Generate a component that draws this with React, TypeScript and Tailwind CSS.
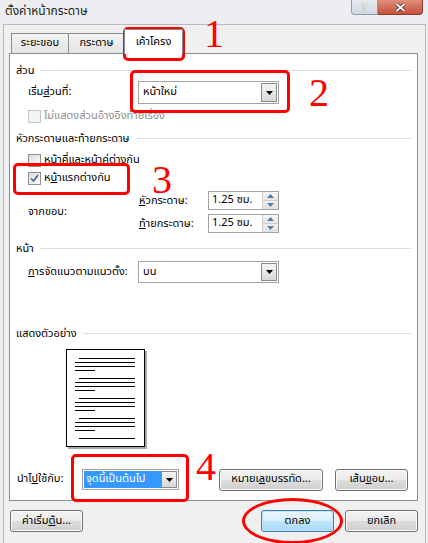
import React from "react";

const btn =
  "flex h-[22px] items-center justify-center rounded-[3px] border border-[#707070] bg-[linear-gradient(to_bottom,#f2f2f2_0%,#ebebeb_49%,#dddddd_50%,#cfcfcf_100%)] shadow-[inset_0_0_0_1px_#fbfbfb] text-[11px] text-black";

function DropBtn() {
  return (
    <div className="flex w-[16px] items-center justify-center border border-[#8a8a8a] bg-[linear-gradient(to_bottom,#f4f4f4,#d8d8d8)]">
      <svg width="7" height="4" viewBox="0 0 7 4">
        <path d="M0 0H7L3.5 4Z" fill="#000" />
      </svg>
    </div>
  );
}

function Select({ className, text }: { className: string; text: string }) {
  return (
    <div className={"flex items-stretch border border-[#a2a2a2] bg-white p-px " + className}>
      <div className="flex flex-1 items-center pl-[3px] text-[11px]">{text}</div>
      <DropBtn />
    </div>
  );
}

function Header({ text }: { text: string }) {
  return (
    <div className="flex h-[14px] items-center">
      <span className="pr-[6px] text-[11px] leading-none">{text}</span>
      <div className="h-px flex-1 bg-[#d5dfe5]" />
    </div>
  );
}

function Checkbox({ checked, disabled }: { checked?: boolean; disabled?: boolean }) {
  return (
    <div
      className={
        "flex h-[13px] w-[13px] items-center justify-center border " +
        (disabled
          ? "border-[#c6c6c6] bg-[#f4f4f4]"
          : "border-[#8e8f8f] bg-[linear-gradient(135deg,#dcdcdc,#ffffff)]")
      }
    >
      {checked && (
        <svg width="9" height="9" viewBox="0 0 9 9">
          <path d="M1 4.5L3.5 7L8 1" stroke="#4a5f97" strokeWidth="1.6" fill="none" />
        </svg>
      )}
    </div>
  );
}

function Spin({ value }: { value: string }) {
  return (
    <div className="flex h-[19px] w-[71px] items-stretch border border-[#a2a2a2] bg-white">
      <div className="flex flex-1 items-center pl-[3px] text-[11px]">{value}</div>
      <div className="flex w-[16px] flex-col border-l border-[#d0d0d0]">
        <div className="flex flex-1 items-center justify-center border-b border-[#d0d0d0] bg-[linear-gradient(to_bottom,#f7f7f7,#e6e6e6)]">
          <svg width="7" height="4" viewBox="0 0 7 4">
            <path d="M0 4H7L3.5 0Z" fill="#4d7fb3" />
          </svg>
        </div>
        <div className="flex flex-1 items-center justify-center bg-[linear-gradient(to_bottom,#f0f0f0,#e0e0e0)]">
          <svg width="7" height="4" viewBox="0 0 7 4">
            <path d="M0 0H7L3.5 4Z" fill="#4d7fb3" />
          </svg>
        </div>
      </div>
    </div>
  );
}

function Preview() {
  const lines: React.ReactNode[] = [];
  for (let k = 0; k < 5; k++) {
    const y = 8.5 + 20 * k;
    lines.push(<line key={"a" + k} x1={12} x2={68} y1={y} y2={y} stroke="#000" />);
    if (k < 4) {
      lines.push(<line key={"b" + k} x1={8} x2={68} y1={y + 4} y2={y + 4} stroke="#000" />);
      lines.push(<line key={"c" + k} x1={8} x2={68} y1={y + 8} y2={y + 8} stroke="#000" />);
      lines.push(<line key={"d" + k} x1={8} x2={28} y1={y + 12} y2={y + 12} stroke="#000" />);
    }
  }
  return (
    <div className="ml-[50px] mt-[9px] h-[98px] w-[79px] border border-black bg-white shadow-[2px_2px_0_#a8a8a8]">
      <svg width="77" height="96" viewBox="0 0 77 96">
        {lines}
      </svg>
    </div>
  );
}

const num =
  "pointer-events-none absolute text-[40px] text-[#ff0000] [font-family:'Liberation_Serif',serif]";
const box = "pointer-events-none absolute rounded-[5px] border-[3px] border-[#ff0000]";

export default function App() {
  return (
    <div className="relative flex h-[543px] w-[428px] flex-col overflow-hidden bg-[#eceef1] text-black [font-family:Tahoma,'Noto_Sans_Thai','Leelawadee_UI','DejaVu_Sans',sans-serif]">
      {/* title bar */}
      <div className="flex h-[24px] shrink-0 items-start justify-between">
        <div className="pl-[5px] pt-[3px] text-[12px] leading-[16px] text-[#1e1e1e]">ตั้งค่าหน้ากระดาษ</div>
        <div className="mr-[5px] flex">
          <div className="flex h-[15px] w-[27px] items-center justify-center rounded-bl-[4px] border border-t-0 border-[#8d99a8] bg-[linear-gradient(to_bottom,#e6ebf1,#cfd8e3)] text-[11px] font-bold leading-none text-white [text-shadow:0_0_1px_#333]">
            ?
          </div>
          <div className="flex h-[15px] w-[45px] items-center justify-center rounded-br-[4px] border border-l-0 border-t-0 border-[#8e3b2c] bg-[linear-gradient(to_bottom,#e08f7c,#c7503c)]">
            <svg width="11" height="9" viewBox="0 0 11 9">
              <path d="M1.5 1L9.5 8M9.5 1L1.5 8" stroke="#3a2a2a" strokeWidth="3.4" />
              <path d="M1.5 1L9.5 8M9.5 1L1.5 8" stroke="#fff" strokeWidth="1.8" />
            </svg>
          </div>
        </div>
      </div>

      {/* client area */}
      <div className="ml-[3px] mr-[2px] flex flex-1 flex-col border border-b-0 border-[#b3bac4] bg-[#f0f0f0] pl-[5px] pr-[7px]">
        {/* tabs */}
        <div className="flex h-[28px] items-end pl-[2px] text-[11px]">
          <div className="flex h-[20px] w-[58px] items-center justify-center border border-b-0 border-[#898c95] bg-[linear-gradient(to_bottom,#f3f3f3,#e3e3e3)]">
            ระยะขอบ
          </div>
          <div className="flex h-[20px] w-[56px] items-center justify-center border border-b-0 border-l-0 border-[#898c95] bg-[linear-gradient(to_bottom,#f3f3f3,#e3e3e3)]">
            กระดาษ
          </div>
          <div className="relative z-10 -mb-px -ml-[1px] flex h-[25px] w-[59px] items-center justify-center border border-b-0 border-[#898c95] bg-white">
            เค้าโครง
          </div>
        </div>

        {/* panel */}
        <div className="flex h-[448px] flex-col border border-[#898c95] bg-white pl-[6px] pr-[6px] text-[11px]">
          <div className="mt-[9px]">
            <Header text="ส่วน" />
          </div>
          <div className="mt-[4px] flex h-[23px] items-center pl-[12px]">
            <div className="w-[110px]">
              เริ่ม<u>ส</u>่วนที่:
            </div>
            <Select className="h-[23px] w-[141px]" text="หน้าใหม่" />
          </div>
          <div className="mt-[2px] flex h-[20px] items-center gap-[3px] pl-[12px] text-[#8d8d8d]">
            <Checkbox disabled />
            <span>ไม่แสดงส่วนอ้างอิงท้ายเรื่อง</span>
          </div>

          <div className="mt-[5px]">
            <Header text="หัวกระดาษและท้ายกระดาษ" />
          </div>
          <div className="mt-[6px] flex h-[18px] items-center gap-[3px] pl-[12px]">
            <Checkbox />
            <span>หน้าคี่และหน้าคู่ต่างกัน</span>
          </div>
          <div className="flex h-[18px] items-center gap-[3px] pl-[12px]">
            <Checkbox checked />
            <span>
              ห<u>น้</u>าแรกต่างกัน
            </span>
          </div>
          <div className="mt-[4px] flex h-[42px] items-center pl-[12px]">
            <div className="w-[111px]">จากขอบ:</div>
            <div className="flex flex-col gap-[4px]">
              <div className="flex items-center">
                <div className="w-[69px] leading-[14px]">
                  <u>หั</u>วกระดาษ:
                </div>
                <Spin value="1.25 ซม." />
              </div>
              <div className="flex items-center">
                <div className="w-[69px] leading-[14px]">
                  <u>ท้</u>ายกระดาษ:
                </div>
                <Spin value="1.25 ซม." />
              </div>
            </div>
          </div>

          <div className="mt-[8px]">
            <Header text="หน้า" />
          </div>
          <div className="mt-[6px] flex h-[22px] items-center pl-[12px]">
            <div className="w-[110px]">
              <u>ก</u>ารจัดแนวตามแนวตั้ง:
            </div>
            <Select className="h-[22px] w-[141px]" text="บน" />
          </div>

          <div className="mt-[43px]">
            <Header text="แสดงตัวอย่าง" />
          </div>
          <Preview />

          <div className="mt-[22px] flex h-[21px] items-center pl-[1px]">
            <div className="w-[65px]">
              นำไ<u>ป</u>ใช้กับ:
            </div>
            <div className="flex h-[21px] w-[97px] items-stretch border border-[#a2a2a2] bg-white p-px">
              <div className="flex flex-1 items-center bg-[#3399ff] pl-[2px] text-white">จุดนี้เป็นต้นไป</div>
              <DropBtn />
            </div>
            <div className="ml-auto mr-[3px] flex gap-[12px]">
              <div className={btn + " w-[104px]"}>
                หมายเ<u>ล</u>ขบรรทัด...
              </div>
              <div className={btn + " w-[73px]"}>
                เส้น<u>ข</u>อบ...
              </div>
            </div>
          </div>
        </div>

        {/* bottom buttons */}
        <div className="mt-[9px] flex items-center">
          <div className={btn + " ml-[1px] w-[73px]"}>
            ค่าเริ่ม<u>ต้</u>น...
          </div>
          <div className="ml-auto flex gap-[11px]">
            <div className="flex h-[22px] w-[73px] items-center justify-center rounded-[3px] border border-[#3c7fb1] bg-[linear-gradient(to_bottom,#eaf6fd_0%,#d9f0fc_49%,#bee6fd_50%,#a7d9f5_100%)] shadow-[inset_0_0_0_1px_#c4e5f6] text-[11px]">
              ตกลง
            </div>
            <div className={btn + " w-[73px]"}>ยกเลิก</div>
          </div>
        </div>
      </div>

      {/* annotations */}
      <div className={box + " left-[123px] top-[27px] h-[34px] w-[62px]"} />
      <div className={num + " left-[204px] top-[20px] leading-[28px]"}>1</div>
      <div className={box + " left-[130px] top-[70px] h-[43px] w-[160px]"} />
      <div className={num + " left-[309px] top-[79px] leading-[28px]"}>2</div>
      <div className={box + " left-[13px] top-[163px] h-[32px] w-[117px]"} />
      <div className={num + " left-[152px] top-[168px] leading-[24px]"}>3</div>
      <div className={box + " left-[71px] top-[454px] h-[48px] w-[118px]"} />
      <div className={num + " left-[196px] top-[453px] leading-[28px]"}>4</div>
      <div className="pointer-events-none absolute left-[242px] top-[498px] h-[46px] w-[101px] rounded-[50%] border-[3px] border-[#ff0000]" />
    </div>
  );
}
